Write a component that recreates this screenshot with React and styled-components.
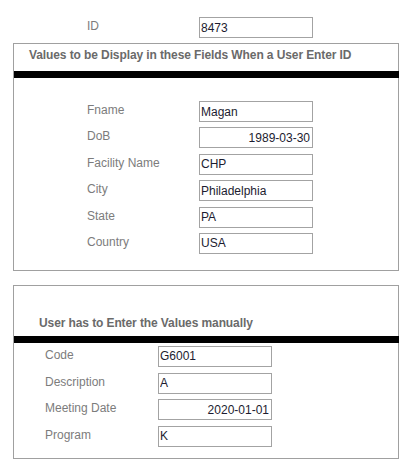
import React from 'react';
import styled, { createGlobalStyle } from 'styled-components';

const GlobalStyle = createGlobalStyle`
  body {
    margin: 0;
    background: #ffffff;
    font-family: "Liberation Sans", Arial, sans-serif;
    font-size: 12px;
  }
`;

const Page = styled.div`
  padding: 17px 0 0 13px;
  width: 386px;
`;

const IdRow = styled.div`
  display: grid;
  grid-template-columns: 112px 114px;
  padding-left: 74px;
  margin-bottom: 5px;
`;

const Panel = styled.div`
  box-sizing: border-box;
  width: 386px;
  border: 1px solid #a0a0a0;
  margin-bottom: ${(p) => p.gapAfter || 0}px;
  padding-bottom: ${(p) => p.bottom}px;
`;

const Header = styled.div`
  padding: ${(p) => p.top}px 0 0 ${(p) => p.left}px;
  height: ${(p) => p.height}px;
  line-height: 15px;
  font-weight: bold;
  letter-spacing: -0.1px;
  color: #6a6a6a;
`;

const Bar = styled.div`
  height: 7px;
  background: #000;
  margin-right: -1px;
`;

const Fields = styled.div`
  display: grid;
  grid-template-columns: ${(p) => p.labelWidth}px 114px;
  row-gap: ${(p) => p.rowGap}px;
  padding: ${(p) => p.top}px 0 0 ${(p) => p.left}px;
`;

const Label = styled.div`
  color: #7c7c7c;
  line-height: 15px;
  padding-top: 2px;
`;

const Input = styled.input`
  box-sizing: border-box;
  width: 114px;
  height: 21px;
  margin: 0;
  padding: 0 2px 0 1px;
  border: 1px solid #a3a3a3;
  font-family: "Liberation Sans", Arial, sans-serif;
  font-size: 12px;
  color: #1c1c30;
  background: #fff;
  text-align: ${(p) => (p.right ? 'right' : 'left')};
  outline: none;
`;

const displayFields = [
  ['Fname', 'Magan'],
  ['DoB', '1989-03-30', true],
  ['Facility Name', 'CHP'],
  ['City', 'Philadelphia'],
  ['State', 'PA'],
  ['Country', 'USA'],
];

const manualFields = [
  ['Code', 'G6001'],
  ['Description', 'A'],
  ['Meeting Date', '2020-01-01', true],
  ['Program', 'K'],
];

export default function App() {
  return (
    <Page>
      <GlobalStyle />
      <IdRow>
        <Label>ID</Label>
        <Input defaultValue="8473" />
      </IdRow>

      <Panel bottom={16} gapAfter={14}>
        <Header top={4} left={15} height={23}>
          Values to be Display in these Fields When a User Enter ID
        </Header>
        <Bar />
        <Fields labelWidth={112} rowGap={5.4} top={23} left={73}>
          {displayFields.map(([label, value, right]) => (
            <React.Fragment key={label}>
              <Label>{label}</Label>
              <Input defaultValue={value} right={right} />
            </React.Fragment>
          ))}
        </Fields>
      </Panel>

      <Panel bottom={11}>
        <Header top={30} left={25} height={20}>
          User has to Enter the Values manually
        </Header>
        <Bar />
        <Fields labelWidth={113} rowGap={5.6} top={3} left={31}>
          {manualFields.map(([label, value, right]) => (
            <React.Fragment key={label}>
              <Label>{label}</Label>
              <Input defaultValue={value} right={right} />
            </React.Fragment>
          ))}
        </Fields>
      </Panel>
    </Page>
  );
}
